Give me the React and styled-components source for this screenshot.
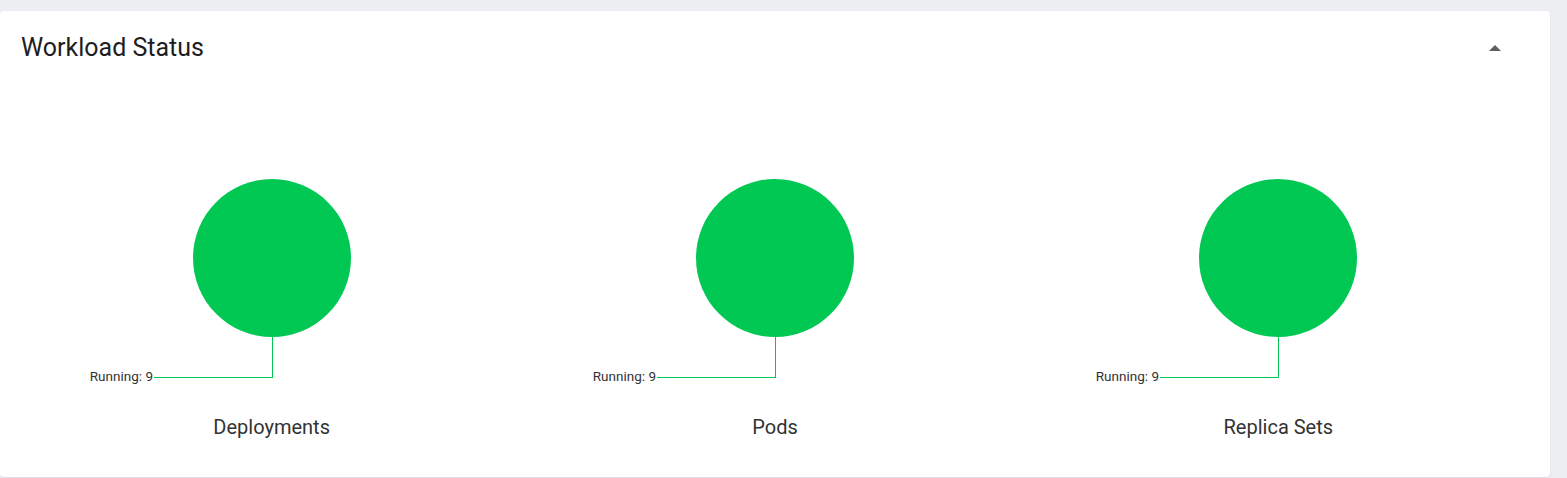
import React from "react"
import styled, { createGlobalStyle } from "styled-components"

const GlobalStyle = createGlobalStyle`
  html, body {
    margin: 0;
    padding: 0;
    background: #eceef1;
    font-family: Roboto, "Liberation Sans", sans-serif;
  }
`

const Page = styled.div`
  padding-top: 11px;
  height: 467px;
  overflow: hidden;
`

const Card = styled.section`
  width: 1550px;
  height: 466px;
  box-sizing: border-box;
  background: #fff;
  border-radius: 4px;
  box-shadow: 0 1px 2px rgba(0, 0, 0, 0.08);
`

const Header = styled.div`
  display: flex;
  align-items: center;
  justify-content: space-between;
  padding: 22px 49px 0 21px;
`

const Title = styled.h2`
  margin: 0;
  font-size: 25px;
  line-height: 30px;
  font-weight: 400;
  color: #1d1d1f;
`

const Toggle = styled.button`
  border: 0;
  background: none;
  padding: 0;
  display: flex;
  cursor: pointer;
`

const Charts = styled.div`
  display: grid;
  grid-template-columns: repeat(3, 1fr);
  padding: 37px 20px 0;
`

const ChartColumn = styled.div`
  display: flex;
  flex-direction: column;
  align-items: center;
`

const ChartTitle = styled.div`
  margin-top: 15px;
  font-size: 20px;
  line-height: 24px;
  color: #333;
`

const GREEN = "#00c853"

const StatusPie = ({ label, count }) => (
  <svg width="400" height="300" viewBox="0 0 400 300">
    <circle cx="200" cy="158" r="79" fill={GREEN} />
    <polyline
      points="200,237 200,277 82,277"
      fill="none"
      stroke={GREEN}
      strokeWidth="1"
      shapeRendering="crispEdges"
    />
    <text
      x="81"
      y="277"
      textAnchor="end"
      dominantBaseline="middle"
      fontSize="13.5"
      fill="#333"
      fontFamily="Roboto, 'Liberation Sans', sans-serif"
    >
      {label}: {count}
    </text>
  </svg>
)

const workloads = [
  { name: "Deployments", running: 9 },
  { name: "Pods", running: 9 },
  { name: "Replica Sets", running: 9 },
]

export default function App() {
  return (
    <Page>
      <GlobalStyle />
      <Card>
        <Header>
          <Title>Workload Status</Title>
          <Toggle aria-label="collapse">
            <svg width="12" height="6" viewBox="0 0 12 6">
              <path d="M0 6 L6 0 L12 6 Z" fill="#5f5f5f" />
            </svg>
          </Toggle>
        </Header>
        <Charts>
          {workloads.map(w => (
            <ChartColumn key={w.name}>
              <StatusPie label="Running" count={w.running} />
              <ChartTitle>{w.name}</ChartTitle>
            </ChartColumn>
          ))}
        </Charts>
      </Card>
    </Page>
  )
}
